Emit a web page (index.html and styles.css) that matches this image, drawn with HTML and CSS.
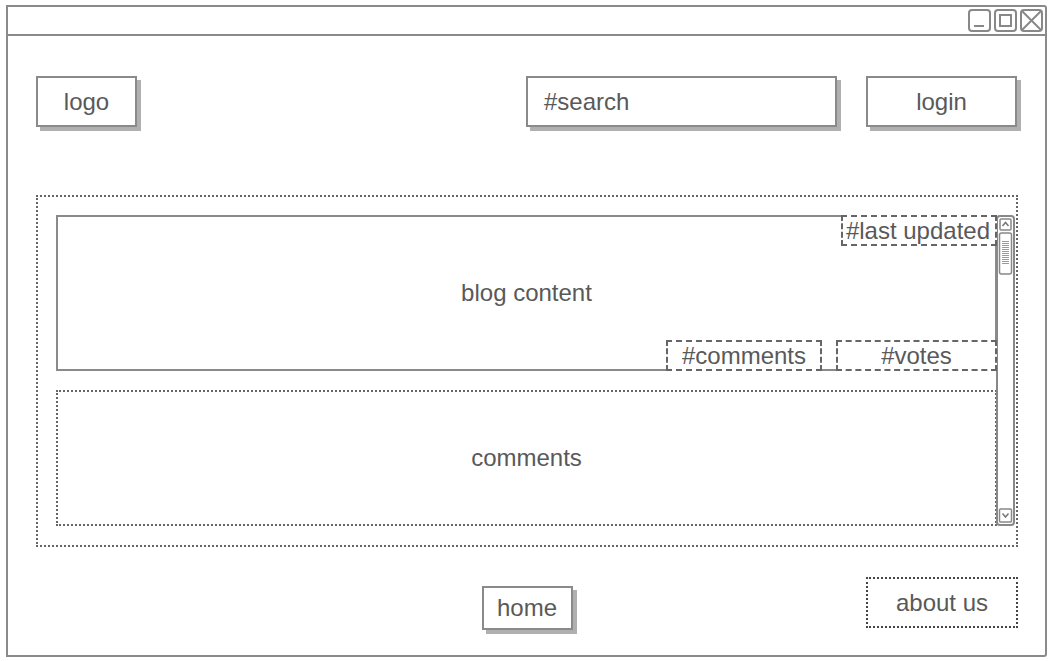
FILE: index.html
```html
<!DOCTYPE html>
<html>
<head>
<meta charset="utf-8">
<link rel="stylesheet" href="styles.css">
</head>
<body>
<div class="window">
  <div class="titlebar">
    <div class="controls">
      <svg class="ctl" width="23" height="23" viewBox="0 0 23 23"><rect x="1" y="1" width="21" height="21" rx="3" fill="none" stroke="#888" stroke-width="2"/><line x1="6" y1="17" x2="16" y2="17" stroke="#888" stroke-width="2"/></svg>
      <svg class="ctl" width="23" height="23" viewBox="0 0 23 23"><rect x="1" y="1" width="21" height="21" rx="3" fill="none" stroke="#888" stroke-width="2"/><rect x="6" y="6" width="11" height="11" fill="none" stroke="#888" stroke-width="2"/></svg>
      <svg class="ctl" width="23" height="23" viewBox="0 0 23 23"><rect x="1" y="1" width="21" height="21" rx="3" fill="none" stroke="#888" stroke-width="2"/><line x1="2" y1="2" x2="21" y2="21" stroke="#888" stroke-width="2"/><line x1="21" y1="2" x2="2" y2="21" stroke="#888" stroke-width="2"/></svg>
    </div>
  </div>
  <div class="main">
    <div class="header">
      <div class="btn logo">logo</div>
      <div class="btn search">#search</div>
      <div class="btn login">login</div>
    </div>
    <div class="container">
      <div class="column">
        <div class="blog">
          <span class="blog-text">blog content</span>
          <div class="tag last">#last updated</div>
          <div class="tag comments-tag">#comments</div>
          <div class="tag votes">#votes</div>
        </div>
        <div class="comments">comments</div>
      </div>
      <svg class="scrollbar" width="20" height="311" viewBox="0 0 20 311">
        <rect x="1" y="1" width="17" height="309" rx="3" fill="none" stroke="#888" stroke-width="2"/>
        <rect x="4" y="4" width="11" height="11" rx="1" fill="none" stroke="#888" stroke-width="1.5"/>
        <polyline points="6.5,11 9.5,7.5 12.5,11" fill="none" stroke="#777" stroke-width="1.5"/>
        <rect x="3.5" y="18" width="12" height="41" rx="2" fill="none" stroke="#888" stroke-width="1.5"/>
        <g stroke="#999" stroke-width="1">
          <line x1="6" y1="26.5" x2="13" y2="26.5"/>
          <line x1="6" y1="28.5" x2="13" y2="28.5"/>
          <line x1="6" y1="30.5" x2="13" y2="30.5"/>
          <line x1="6" y1="32.5" x2="13" y2="32.5"/>
          <line x1="6" y1="34.5" x2="13" y2="34.5"/>
          <line x1="6" y1="36.5" x2="13" y2="36.5"/>
          <line x1="6" y1="38.5" x2="13" y2="38.5"/>
          <line x1="6" y1="40.5" x2="13" y2="40.5"/>
          <line x1="6" y1="42.5" x2="13" y2="42.5"/>
          <line x1="6" y1="44.5" x2="13" y2="44.5"/>
          <line x1="6" y1="46.5" x2="13" y2="46.5"/>
          <line x1="6" y1="48.5" x2="13" y2="48.5"/>
        </g>
        <rect x="3.5" y="294" width="12" height="13" rx="1" fill="none" stroke="#888" stroke-width="1.5"/>
        <polyline points="6.5,298.5 9.5,302 12.5,298.5" fill="none" stroke="#777" stroke-width="1.5"/>
      </svg>
    </div>
    <div class="footer">
      <div class="btn home">home</div>
      <div class="about">about us</div>
    </div>
  </div>
</div>
</body>
</html>
```
FILE: styles.css
```css
* { box-sizing: border-box; }
html, body { margin: 0; padding: 0; background: #fff; }
body {
  font-family: "Liberation Sans", Arial, sans-serif;
  font-size: 24px;
  color: #595959;
}
.window {
  margin: 5px 0 0 6px;
  width: 1041px;
  height: 652px;
  border: 2px solid #8a8a8a;
  border-radius: 0 3px 3px 0;
  display: flex;
  flex-direction: column;
}
.titlebar {
  height: 29px;
  border-bottom: 2px solid #8a8a8a;
  display: flex;
  justify-content: flex-end;
  padding: 2px 2px 0 0;
}
.controls { display: flex; gap: 3px; height: 23px; }
.ctl { display: block; }
.main {
  padding: 40px 27px 0 28px;
  display: flex;
  flex-direction: column;
}
.header {
  display: flex;
  align-items: flex-start;
  height: 51px;
}
.btn {
  border: 2px solid #8a8a8a;
  box-shadow: 4px 4px 0 #b0b0b0;
  background: #fff;
  display: flex;
  align-items: center;
  justify-content: center;
}
.logo { width: 101px; height: 51px; }
.search {
  width: 311px; height: 51px;
  margin-left: 389px;
  justify-content: flex-start;
  padding-left: 16px;
}
.login { width: 151px; height: 51px; margin-left: 29px; }
.container {
  margin-top: 68px;
  height: 352px;
  border: 2px dotted #666;
  padding: 18px 0 19px 18px;
  display: flex;
  align-items: flex-start;
}
.column {
  width: 941px;
  display: flex;
  flex-direction: column;
  gap: 19px;
}
.blog {
  position: relative;
  height: 156px;
  border: 2px solid #8a8a8a;
  display: flex;
  align-items: center;
  justify-content: center;
}
.tag {
  position: absolute;
  border: 2px dashed #666;
  background: #fff;
  display: flex;
  align-items: center;
  justify-content: center;
  height: 31px;
  width: 156px;
}
.last { top: -2px; right: -2px; justify-content: flex-end; padding-right: 5px; }
.comments-tag { bottom: -2px; right: 173px; }
.votes { bottom: -2px; right: -2px; width: 161px; }
.comments {
  height: 136px;
  border: 2px dotted #666;
  display: flex;
  align-items: center;
  justify-content: center;
}
.scrollbar { display: block; margin-left: -1px; }
.footer {
  margin-top: 30px;
  display: grid;
  grid-template-columns: 1fr auto 1fr;
  align-items: start;
}
.home {
  grid-column: 2;
  width: 91px;
  height: 44px;
  margin-top: 9px;
}
.about {
  grid-column: 3;
  justify-self: end;
  width: 152px;
  height: 51px;
  border: 2px dotted #444;
  display: flex;
  align-items: center;
  justify-content: center;
}
```
